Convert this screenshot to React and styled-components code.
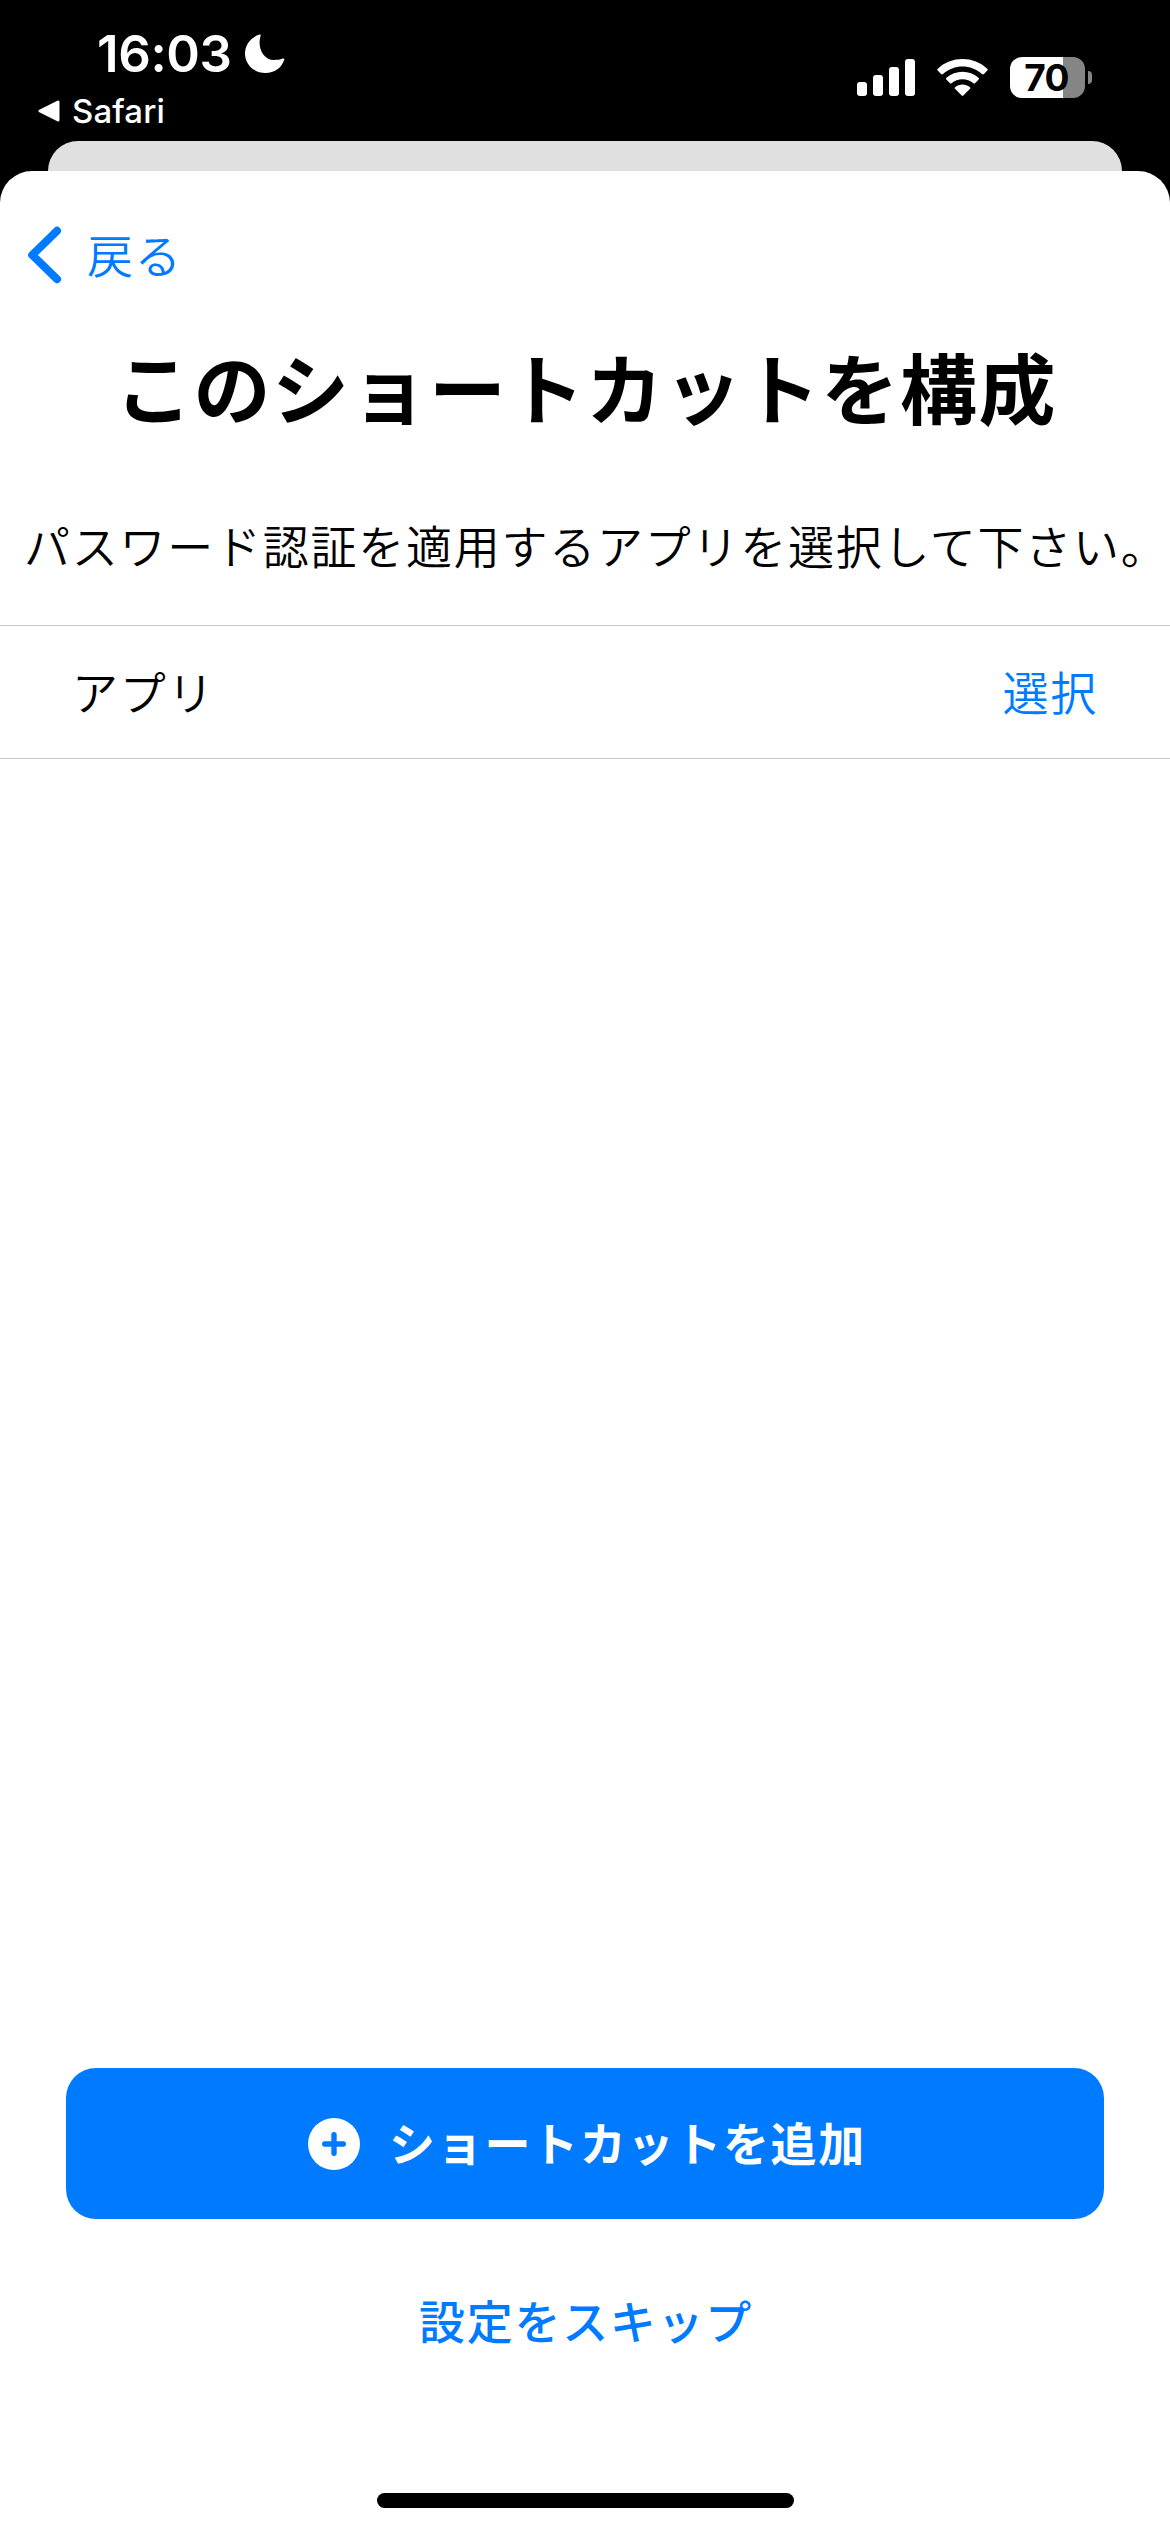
import React from "react";
import styled, { createGlobalStyle } from "styled-components";

const BLUE = "#007aff";

const GlobalStyle = createGlobalStyle`
  * { box-sizing: border-box; }
  body {
    margin: 0;
    background: #000;
    font-family: Inter, "Noto Sans CJK JP", sans-serif;
  }
  button {
    appearance: none;
    border: 0;
    margin: 0;
    padding: 0;
    background: none;
    font: inherit;
    color: inherit;
  }
`;

const Screen = styled.div`
  display: flex;
  flex-direction: column;
  width: 1170px;
  height: 2532px;
  overflow: hidden;
  background: #000;
`;

const StatusBar = styled.header`
  display: flex;
  justify-content: space-between;
  height: 141px;
  padding: 0 78px 0 38px;
  color: #fff;
`;

const StatusLeft = styled.div`
  display: flex;
  flex-direction: column;
  padding-top: 24px;
`;

const Clock = styled.div`
  display: flex;
  align-items: center;
  gap: 13px;
  height: 60px;
  padding-left: 59px;
  font-size: 51px;
  font-weight: 600;
  letter-spacing: -0.4px;
  line-height: 60px;
`;

const BackToApp = styled.button`
  display: flex;
  align-items: center;
  gap: 11px;
  height: 40px;
  margin-top: 7px;
  font-size: 33px;
  font-weight: 500;
  letter-spacing: 0.1px;
  line-height: 40px;
`;

const StatusRight = styled.div`
  display: flex;
  align-items: center;
  height: 41px;
  margin-top: 57px;
`;

const Battery = styled.div`
  display: flex;
  align-items: center;
  gap: 3px;
  margin-left: 22px;
`;

const BatteryBody = styled.div`
  display: flex;
  align-items: center;
  justify-content: center;
  width: 75px;
  height: 41px;
  padding-right: 2px;
  border-radius: 12px;
  background: linear-gradient(to right, #fff ${(p) => p.$level}%, #858585 ${(p) => p.$level}%);
  color: #000;
  font-size: 37px;
  font-weight: 700;
  letter-spacing: -0.8px;
  line-height: 41px;
`;

const BatteryCap = styled.div`
  width: 4px;
  height: 13px;
  border-radius: 0 5px 5px 0;
  background: #858585;
`;

const SheetBehind = styled.div`
  height: 30px;
  margin: 0 48px;
  border-radius: 30px 30px 0 0;
  background: #e0e0e0;
`;

const Sheet = styled.main`
  display: flex;
  flex: 1;
  flex-direction: column;
  border-radius: 32px 32px 0 0;
  background: #fff;
  color: #000;
  font-family: "Noto Sans CJK JP", sans-serif;
`;

const NavBar = styled.nav`
  display: flex;
  height: 132px;
  padding: 48px 0 0 27px;
`;

const BackButton = styled.button`
  display: flex;
  align-items: center;
  gap: 24px;
  height: 72px;
  color: ${BLUE};
`;

const Label = styled.span`
  display: block;
  padding-bottom: 5px;
  font-size: 46px;
  font-weight: ${(p) => p.$weight || 350};
  letter-spacing: 1.7px;
  line-height: 60px;
  white-space: nowrap;
`;

const Title = styled.h1`
  margin: 33px 0 0;
  padding-left: 2px;
  font-size: 77px;
  font-weight: 700;
  letter-spacing: 1.5px;
  line-height: 100px;
  text-align: center;
  white-space: nowrap;
`;

const Prompt = styled.p`
  margin: 78px 0 0;
  padding-left: 24px;
  font-size: 46px;
  font-weight: 350;
  letter-spacing: 1.75px;
  line-height: 60px;
  white-space: nowrap;
`;

const Row = styled.div`
  display: flex;
  align-items: center;
  justify-content: space-between;
  height: 134px;
  margin-top: 51px;
  padding: 0 72px;
  border-top: 1px solid #c6c6c8;
  border-bottom: 1px solid #c6c6c8;
`;

const ChooseButton = styled.button`
  color: ${BLUE};
`;

const Footer = styled.footer`
  display: flex;
  flex-direction: column;
  align-items: center;
  margin-top: auto;
  padding: 0 66px 24px;
`;

const AddButton = styled.button`
  display: flex;
  align-items: center;
  justify-content: center;
  gap: 29px;
  width: 100%;
  height: 151px;
  padding-left: 4px;
  border-radius: 30px;
  background: ${BLUE};
  color: #fff;
`;

const SkipButton = styled.button`
  height: 65px;
  margin-top: 70px;
  padding-left: 2px;
  color: ${BLUE};
`;

const HomeIndicator = styled.div`
  width: 417px;
  height: 15px;
  margin-top: 139px;
  border-radius: 8px;
  background: #000;
`;

const MoonIcon = () => (
  <svg width="40" height="40" viewBox="0 0 40 40">
    <path
      d="M14.6 .6C15.5.2 16 .8 15.6 1.8C12.2 12.5 17.5 26 29 26C32 26 35 25.8 37.6 24.6C39 24 39.7 24.7 39.2 26C36.3 34 29.5 39 20.5 39C9 39 0 30.5 0 19.5C0 10.5 6.5 3 14.6.6Z"
      fill="#fff"
    />
  </svg>
);

const TriangleIcon = () => (
  <svg width="23" height="22" viewBox="0 0 23 22">
    <path d="M2 11L20 2V20Z" fill="#fff" stroke="#fff" strokeWidth="3" strokeLinejoin="round" />
  </svg>
);

const SignalIcon = () => (
  <svg width="58" height="37" viewBox="0 0 58 37" fill="#fff">
    <rect x="0" y="23" width="10" height="14" rx="3" />
    <rect x="16" y="16" width="10" height="21" rx="3" />
    <rect x="32" y="8" width="10" height="29" rx="3" />
    <rect x="48" y="0" width="10" height="37" rx="3" />
  </svg>
);

const WifiGlyph = styled.svg`
  margin-left: 22px;
`;

const WifiIcon = () => (
  <WifiGlyph width="51" height="37" viewBox="0 0 51 37" fill="#fff">
    <path d="M.5 10C14-3.3 37-3.3 50.5 10Q51 10.8 50.3 11.6L47 15Q46 15.8 45 15C34 5 17 5 6 15Q5 15.8 4 15L.7 11.6Q0 10.8.5 10Z" />
    <path d="M9.2 19C18.5 10.5 32.5 10.5 41.8 19Q42.4 19.8 41.7 20.6L38 24.3Q37.2 24.8 36.4 24.2C30.5 18.8 20.5 18.8 14.6 24.2Q13.8 24.8 13 24.3L9.3 20.6Q8.6 19.8 9.2 19Z" />
    <path d="M18 28.2C22.5 24.6 28.5 24.6 33 28.2Q33.8 29 33 29.8L26.6 36.2Q25.5 37.3 24.4 36.2L18 29.8Q17.2 29 18 28.2Z" />
  </WifiGlyph>
);

const ChevronIcon = () => (
  <svg width="36" height="58" viewBox="0 0 36 58">
    <path
      d="M30 4.8L5.2 29L30 53.2"
      fill="none"
      stroke={BLUE}
      strokeWidth="8"
      strokeLinecap="round"
      strokeLinejoin="round"
    />
  </svg>
);

const PlusCircleIcon = () => (
  <svg width="52" height="52" viewBox="0 0 52 52">
    <circle cx="26" cy="26" r="26" fill="#fff" />
    <path d="M26 16.7V35.3M16.7 26H35.3" stroke={BLUE} strokeWidth="5.4" strokeLinecap="round" />
  </svg>
);

export default function App() {
  return (
    <>
      <GlobalStyle />
      <Screen>
        <StatusBar>
          <StatusLeft>
            <Clock>
              16:03
              <MoonIcon />
            </Clock>
            <BackToApp>
              <TriangleIcon />
              Safari
            </BackToApp>
          </StatusLeft>
          <StatusRight>
            <SignalIcon />
            <WifiIcon />
            <Battery>
              <BatteryBody $level={70.5}>70</BatteryBody>
              <BatteryCap />
            </Battery>
          </StatusRight>
        </StatusBar>
        <SheetBehind />
        <Sheet>
          <NavBar>
            <BackButton>
              <ChevronIcon />
              <Label>戻る</Label>
            </BackButton>
          </NavBar>
          <Title>このショートカットを構成</Title>
          <Prompt>パスワード認証を適用するアプリを選択して下さい。</Prompt>
          <Row>
            <Label>アプリ</Label>
            <ChooseButton>
              <Label>選択</Label>
            </ChooseButton>
          </Row>
          <Footer>
            <AddButton>
              <PlusCircleIcon />
              <Label $weight={700}>ショートカットを追加</Label>
            </AddButton>
            <SkipButton>
              <Label $weight={500}>設定をスキップ</Label>
            </SkipButton>
            <HomeIndicator />
          </Footer>
        </Sheet>
      </Screen>
    </>
  );
}
